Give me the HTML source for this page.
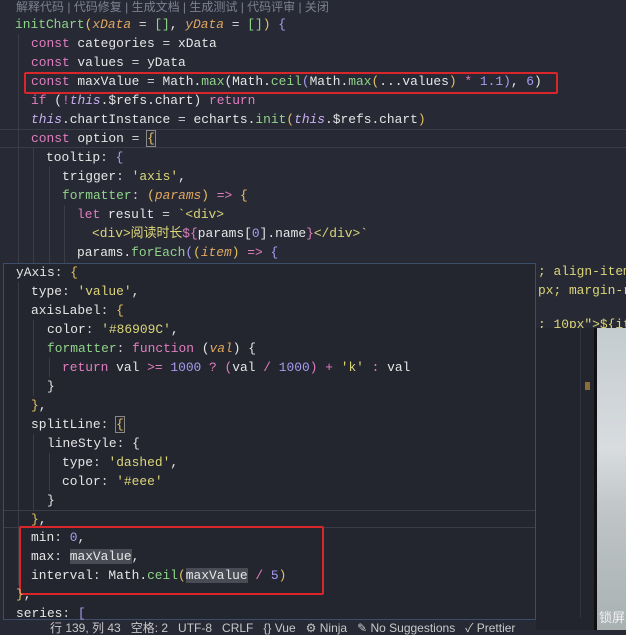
<!DOCTYPE html>
<html><head><meta charset="utf-8"><style>
*{margin:0;padding:0;box-sizing:border-box}
body{width:626px;height:630px;overflow:hidden;background:#272935;font-family:"Liberation Mono","Noto Sans CJK SC",monospace;font-size:12.9px;color:#e6e6e6;position:relative}
.l{position:absolute;white-space:pre;height:19px;line-height:19px}
.k{color:#e17ec0}.f{color:#8fd48a}.p{color:#e0a860;font-style:italic}.s{color:#dcd67a}.n{color:#a89cf0}.o{color:#d0d0d0}.t{color:#c8b0f0;font-style:italic}.b{color:#e8c060}.g{color:#8a8e9a}
.hl{background:#4a4c55}
.box{position:absolute;border:2px solid #d8262a;border-radius:2px}
.ig{position:absolute;width:1px;background:#3a3d48}
</style></head><body>
<div class="ig" style="left:18px;top:34px;height:229px"></div>
<div class="ig" style="left:33px;top:148px;height:115px"></div>
<div class="ig" style="left:49px;top:167px;height:96px"></div>
<div class="ig" style="left:64px;top:205px;height:58px"></div>
<div class="l" style="left:16px;top:-2px;font-family:'Liberation Sans','Noto Sans CJK SC',sans-serif;font-size:12px;color:#7d8190">解释代码 | 代码修复 | 生成文档 | 生成测试 | 代码评审 | 关闭</div>
<div class="l" style="left:15px;top:15px"><span class="f">initChart</span><span class="b">(</span><span class="p">xData</span> <span class="o">=</span> <span class="f">[]</span>, <span class="p">yData</span> <span class="o">=</span> <span class="f">[]</span><span class="b">)</span> <span class="n">{</span></div>
<div class="l" style="left:31px;top:34px"><span class="k">const</span> categories <span class="o">=</span> xData</div>
<div class="l" style="left:31px;top:53px"><span class="k">const</span> values <span class="o">=</span> yData</div>
<div class="l" style="left:31px;top:72px"><span class="k">const</span> maxValue <span class="o">=</span> Math.<span class="f">max</span>(Math.<span class="f">ceil</span><span class="n">(</span>Math.<span class="f">max</span><span class="b">(</span>...values<span class="b">)</span> <span class="k">*</span> <span class="n">1.1</span><span class="n">)</span>, <span class="n">6</span>)</div>
<div class="box" style="left:24px;top:72px;width:534px;height:22px"></div>
<div class="l" style="left:31px;top:91px"><span class="k">if</span> (<span class="k">!</span><span class="t">this</span>.$refs.chart) <span class="k">return</span></div>
<div class="l" style="left:31px;top:110px"><span class="t">this</span>.chartInstance <span class="o">=</span> echarts.<span class="f">init</span><span class="b">(</span><span class="t">this</span>.$refs.chart<span class="b">)</span></div>
<div style="position:absolute;left:0;top:129px;width:626px;height:19px;border-top:1px solid #3a3d48;border-bottom:1px solid #3a3d48"></div>
<div class="l" style="left:31px;top:129px"><span class="k">const</span> option <span class="o">=</span> <span class="b" style="outline:1px solid #888">{</span></div>
<div class="l" style="left:46px;top:148px">tooltip<span class="o">:</span> <span class="n">{</span></div>
<div class="l" style="left:62px;top:167px">trigger<span class="o">:</span> <span class="s">'axis'</span>,</div>
<div class="l" style="left:62px;top:186px"><span class="f">formatter</span><span class="o">:</span> <span class="b">(</span><span class="p">params</span><span class="b">)</span> <span class="k">=&gt;</span> <span class="b">{</span></div>
<div class="l" style="left:77px;top:205px"><span class="k">let</span> result <span class="o">=</span> <span class="s">`&lt;div&gt;</span></div>
<div class="l" style="left:92px;top:224px"><span class="s">&lt;div&gt;阅读时长</span><span class="k">${</span>params[<span class="n">0</span>].name<span class="k">}</span><span class="s">&lt;/div&gt;`</span></div>
<div class="l" style="left:77px;top:243px">params.<span class="f">forEach</span><span class="n">(</span><span class="b">(</span><span class="p">item</span><span class="b">)</span> <span class="k">=&gt;</span> <span class="n">{</span></div>
<div class="l" style="left:538px;top:262px"><span class="s">; align-items</span></div>
<div class="l" style="left:538px;top:281px"><span class="s">px; margin-ri</span></div>
<div class="l" style="left:538px;top:315px"><span class="s">; 10px"&gt;${it</span></div>
<div style="position:absolute;left:536px;top:328px;width:90px;height:302px;background:#22242e"></div>
<div style="position:absolute;left:580px;top:328px;width:1px;height:290px;background:#303340"></div>
<div style="position:absolute;left:585px;top:382px;width:5px;height:8px;background:#8a6e3a"></div>
<div style="position:absolute;left:594px;top:328px;width:3px;height:302px;background:#111"></div>
<div style="position:absolute;left:597px;top:328px;width:29px;height:302px;background:linear-gradient(180deg,#c4ccd0,#d8dcdf 40%,#c0c6c8 60%,#a8b0b2)"></div>
<div class="l" style="left:599px;top:607px;font-family:'Noto Sans CJK SC',sans-serif;font-size:13px;color:#f0f0f0">锁屏</div>
<div style="position:absolute;left:3px;top:263px;width:533px;height:357px;background:#23252f;border:1px solid #3c4f6a"></div>
<div class="ig" style="left:18px;top:282px;height:303px"></div>
<div class="ig" style="left:33px;top:320px;height:76px"></div>
<div class="ig" style="left:49px;top:358px;height:19px"></div>
<div class="ig" style="left:33px;top:434px;height:76px"></div>
<div class="ig" style="left:49px;top:453px;height:38px"></div>
<div class="l" style="left:16px;top:263px">yAxis<span class="o">:</span> <span class="b">{</span></div>
<div class="l" style="left:31px;top:282px">type<span class="o">:</span> <span class="s">'value'</span>,</div>
<div class="l" style="left:31px;top:301px">axisLabel<span class="o">:</span> <span class="b">{</span></div>
<div class="l" style="left:47px;top:320px">color<span class="o">:</span> <span class="s">'#86909C'</span>,</div>
<div class="l" style="left:47px;top:339px"><span class="f">formatter</span><span class="o">:</span> <span class="k">function</span> (<span class="p">val</span>) {</div>
<div class="l" style="left:62px;top:358px"><span class="k">return</span> val <span class="k">&gt;=</span> <span class="n">1000</span> <span class="k">?</span> <span class="k">(</span>val <span class="k">/</span> <span class="n">1000</span><span class="k">)</span> <span class="k">+</span> <span class="s">'k'</span> <span class="k">:</span> val</div>
<div class="l" style="left:47px;top:377px">}</div>
<div class="l" style="left:31px;top:396px"><span class="b">}</span>,</div>
<div class="l" style="left:31px;top:415px">splitLine<span class="o">:</span> <span class="b" style="outline:1px solid #888">{</span></div>
<div class="l" style="left:47px;top:434px">lineStyle<span class="o">:</span> {</div>
<div class="l" style="left:62px;top:453px">type<span class="o">:</span> <span class="s">'dashed'</span>,</div>
<div class="l" style="left:62px;top:472px">color<span class="o">:</span> <span class="s">'#eee'</span></div>
<div class="l" style="left:47px;top:491px">}</div>
<div style="position:absolute;left:4px;top:510px;width:531px;height:18px;border-top:1px solid #3a3d48;border-bottom:1px solid #3a3d48"></div>
<div class="l" style="left:31px;top:510px"><span class="b">}</span>,</div>
<div class="l" style="left:31px;top:528px">min<span class="o">:</span> <span class="n">0</span>,</div>
<div class="l" style="left:31px;top:547px">max<span class="o">:</span> <span class="hl">maxValue</span>,</div>
<div class="l" style="left:31px;top:566px">interval<span class="o">:</span> Math.<span class="f">ceil</span><span class="b">(</span><span class="hl">maxValue</span> <span class="k">/</span> <span class="n">5</span><span class="b">)</span></div>
<div class="box" style="left:19px;top:526px;width:305px;height:69px"></div>
<div class="l" style="left:16px;top:585px"><span class="b">}</span>,</div>
<div class="l" style="left:16px;top:604px">series<span class="o">:</span> <span class="n">[</span></div>
<div class="l" style="left:50px;top:621px;font-family:'Liberation Sans','Noto Sans CJK SC',sans-serif;font-size:12px;color:#c8c8c8;height:12px;line-height:14px">行 139, 列 43&nbsp;&nbsp;&nbsp;空格: 2&nbsp;&nbsp;&nbsp;UTF-8&nbsp;&nbsp;&nbsp;CRLF&nbsp;&nbsp;&nbsp;{} Vue&nbsp;&nbsp;&nbsp;⚙ Ninja&nbsp;&nbsp;&nbsp;✎ No Suggestions&nbsp;&nbsp;&nbsp;✓ Prettier</div>
</body></html>
